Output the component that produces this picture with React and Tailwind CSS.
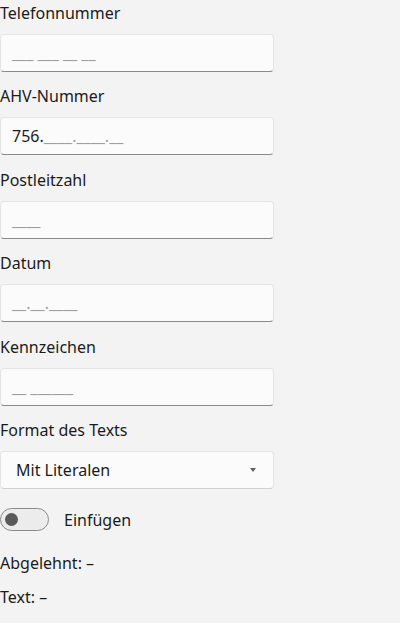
const fields = [
  { label: "Telefonnummer", value: "", mask: "___ ___ __ __" },
  { label: "AHV-Nummer", value: "756.", mask: "____.____.__" },
  { label: "Postleitzahl", value: "", mask: "____" },
  { label: "Datum", value: "", mask: "__.__.____" },
  { label: "Kennzeichen", value: "", mask: "__ ______" },
];

function MaskedBox({ value, mask }) {
  return (
    <div className="w-[274px] h-[38px] shrink-0 rounded-[4px] bg-[#fbfbfb] border border-[#e5e5e5] border-b-[#8a8a8a] flex items-center px-[11px]">
      <span className="text-[#1b1b1b]">{value}</span>
      <span className="text-[#9e9e9e]">{mask}</span>
    </div>
  );
}

export default function App() {
  return (
    <div
      className="w-[400px] h-[623px] overflow-hidden bg-[#f3f3f3] text-[16px] text-[#1b1b1b] flex flex-col"
      style={{ fontFamily: '"Noto Sans", "Open Sans", sans-serif' }}
    >
      {fields.map((f) => (
        <div key={f.label} className="flex flex-col h-[83.4px] shrink-0">
          <div className="h-[34px] shrink-0 leading-[27px]">{f.label}</div>
          <MaskedBox value={f.value} mask={f.mask} />
        </div>
      ))}

      <div className="flex flex-col h-[72px] shrink-0">
        <div className="h-[34px] shrink-0 leading-[27px]">Format des Texts</div>
        <div className="w-[274px] h-[38px] shrink-0 rounded-[4px] bg-[#fbfbfb] border border-[#e5e5e5] border-b-[#d2d2d2] flex items-center justify-between pl-[15px] pr-[17px]">
          <span>Mit Literalen</span>
          <svg width="6" height="4" viewBox="0 0 6 4">
            <path d="M0 0h6L3 4z" fill="#5f5f5f" />
          </svg>
        </div>
      </div>

      <div className="flex items-center gap-[15px] mt-[19px] h-[24px] shrink-0">
        <div className="w-[49px] h-[23px] rounded-full border border-[#8a8a8a] bg-[#ececec] flex items-center pl-[4px]">
          <div className="w-[13px] h-[13px] rounded-full bg-[#5a5a5a]" />
        </div>
        <span>Einfügen</span>
      </div>

      <div className="mt-[20px] leading-[22px] shrink-0">Abgelehnt: –</div>
      <div className="mt-[12px] leading-[22px] shrink-0">Text: –</div>
    </div>
  );
}
